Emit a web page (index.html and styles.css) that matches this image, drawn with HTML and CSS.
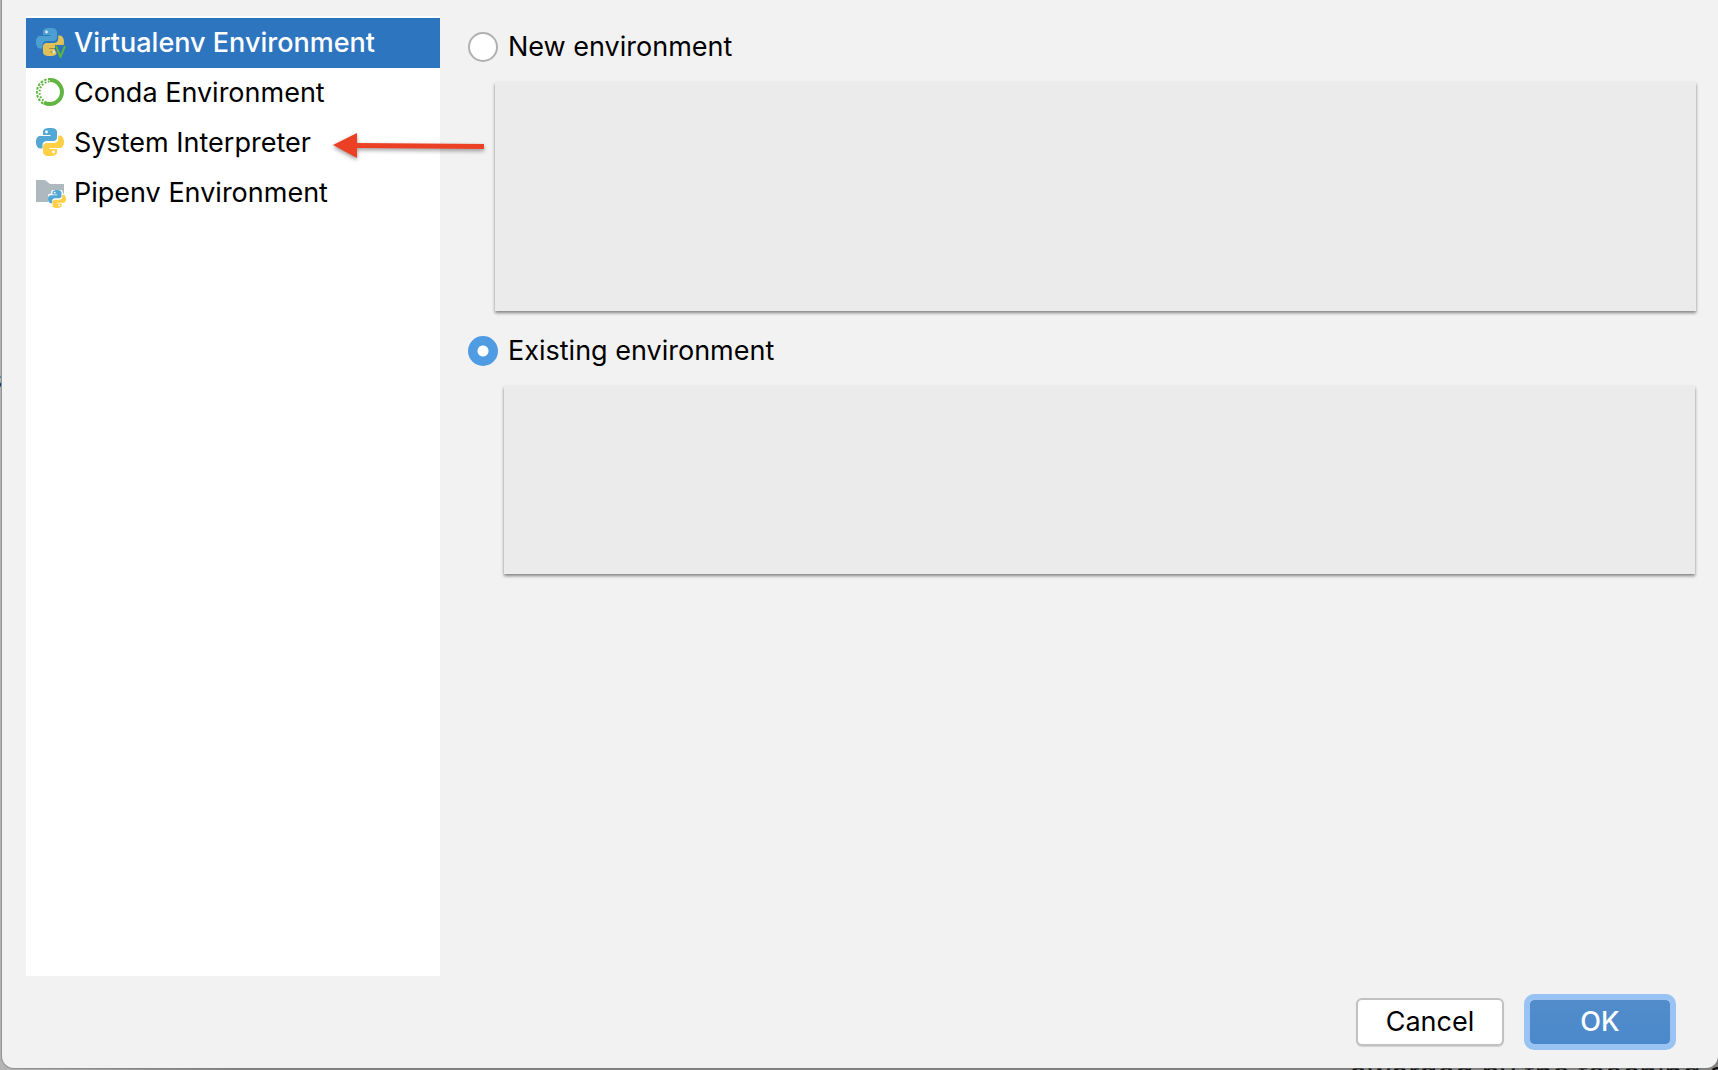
FILE: index.html
```html
<!DOCTYPE html>
<html lang="en">
<head>
<meta charset="utf-8">
<meta name="viewport" content="width=device-width, initial-scale=1">
<title>Add Python Interpreter</title>
<link rel="stylesheet" href="styles.css">
</head>
<body>
<svg class="defs" aria-hidden="true">
  <symbol id="python" viewBox="0 0 28 28">
    <path class="py-blue" d="M14 0C9 0 7 1.500 7 4v3h7.500v1H4C1.500 8 0 10.500 0 14s1.500 6.500 4 6.500h2.500V17c0-2.500 2-4 4.500-4h6.500c2 0 3.500-1.500 3.500-3.500V4c0-2.500-2-4-7-4Z"/>
    <path class="py-yellow" d="M14 28c5 0 7-1.500 7-4v-3h-7.500v-1H24c2.500 0 4-2.500 4-6s-1.500-6.500-4-6.500h-1.800V11c0 2.500-2 4-4.500 4h-7C8.500 15 7 16.500 7 18.500V24c0 2.500 2 4 7 4Z"/>
    <circle class="py-eye" cx="10.500" cy="4" r="1.400"/>
    <circle class="py-eye" cx="17.500" cy="24" r="1.400"/>
  </symbol>
</svg>
<p class="behind behind-bottom" aria-hidden="true">awarded by the teaching a</p>
<p class="behind behind-left" aria-hidden="true">s</p>
<main class="dialog">
  <div class="content">
    <nav class="sidebar">
      <a class="item selected" href="#virtualenv" aria-current="page">
        <svg class="icon" viewBox="0 0 30 30">
          <g class="dim"><use href="#python" width="28" height="28"/></g>
          <path d="M14 20.500h4M14 24h3" stroke="#a98b35" stroke-width="1"/>
          <path d="M19 17h11v5l-4 8h-3l-4-8Z" fill="#2d75bf"/>
          <path d="M20 18l4.500 11L29 18" fill="none" stroke="#5fb53c" stroke-width="2"/>
        </svg>
        Virtualenv Environment
      </a>
      <a class="item" href="#conda">
        <svg class="icon" viewBox="0 0 30 30">
          <path d="M14 2a12 12 0 1 1-6 22.400" fill="none" stroke="#62b543" stroke-width="4"/>
          <path d="M7.200 25.500A13.300 13.300 0 0 1 14 .9" fill="none" stroke="#62b543" stroke-width="2" stroke-dasharray="2.600 1.400"/>
          <path d="M8.500 23.500A11 11 0 0 1 14 3.300" fill="none" stroke="#62b543" stroke-width="2" stroke-dasharray="1.800 1.600" stroke-dashoffset="2"/>
        </svg>
        Conda Environment
      </a>
      <a class="item" href="#system">
        <svg class="icon" viewBox="0 0 30 30"><use href="#python" width="28" height="28"/></svg>
        System Interpreter
        <svg class="arrow" viewBox="0 0 156 32" aria-hidden="true">
          <path d="M1 13 25 1v10l127 1v5L25 16v10Z" fill="#ec4025"/>
        </svg>
      </a>
      <a class="item" href="#pipenv">
        <svg class="icon" viewBox="0 0 30 30">
          <path d="M0 2h9l5 4h14v18H0Z" fill="#adb8bf"/>
          <g transform="translate(12 12) scale(.643)">
            <g class="halo"><use href="#python" width="28" height="28"/></g>
            <use href="#python" width="28" height="28"/>
          </g>
        </svg>
        Pipenv Environment
      </a>
    </nav>
    <form class="options" id="environment">
      <label class="choice"><input type="radio" name="env">New environment</label>
      <section class="panel panel-new" aria-label="New environment settings"></section>
      <label class="choice"><input type="radio" name="env" checked>Existing environment</label>
      <section class="panel panel-existing" aria-label="Existing environment settings"></section>
    </form>
  </div>
  <footer class="actions">
    <button class="button" type="button">Cancel</button>
    <button class="button primary" type="submit" form="environment">OK</button>
  </footer>
</main>
</body>
</html>
```
FILE: styles.css
```css
* { box-sizing: border-box; }

body {
  position: relative;
  display: flex;
  min-height: 100vh;
  margin: 0;
  padding: 0 0 2px 2px;
  overflow: hidden;
  background: linear-gradient(90deg, #b4b4b4, #858585 240px);
  color: #000;
  font: 27px/30px Inter, "Liberation Sans", sans-serif;
}

.defs { position: absolute; width: 0; height: 0; }
.py-blue { fill: #52a7d5; }
.py-yellow { fill: #ffcf45; }
.py-eye { fill: #fff; stroke: none; }

.dialog {
  position: relative;
  display: flex;
  flex: 1;
  flex-direction: column;
  gap: 18px;
  padding: 16px 22px 18px 24px;
  border-radius: 0 0 12px 12px;
  background: #f2f2f2;
  box-shadow: 0 0 0 1px #7778;
}

.content { display: flex; flex: 1; gap: 28px; }

.sidebar {
  flex: 0 0 414px;
  padding-top: 2px;
  background: #fff;
}

.item {
  position: relative;
  display: flex;
  align-items: center;
  gap: 8px;
  height: 50px;
  padding-left: 10px;
  color: inherit;
  text-decoration: none;
}

.selected { background: #2d75bf; color: #fff; font-weight: 500; }
.icon { width: 30px; height: 30px; }
.dim { opacity: .85; }
.halo { stroke: #fff; stroke-width: 4px; }

.arrow {
  position: absolute;
  z-index: 1;
  top: 14px;
  left: 306px;
  width: 156px;
  height: 32px;
  filter: drop-shadow(0 2px 2px #0006);
}

.options { flex: 1; min-width: 0; padding-top: 16px; }

.choice { display: flex; align-items: center; gap: 10px; }

.choice input {
  width: 30px;
  height: 30px;
  margin: 0;
  appearance: none;
  border: 2px solid #b0b0b0;
  border-radius: 50%;
  background: #fff;
}

.choice input:checked {
  border: 0;
  background: radial-gradient(circle, #fff 5px, #4f9ce3 6px);
}

.panel {
  background: #ebebeb;
  box-shadow: 0 2px 3px #0007;
}

.panel-new { height: 229px; margin: 20px 0 25px 27px; }
.panel-existing { height: 188px; margin: 20px 1px 0 36px; }

.actions {
  display: flex;
  align-items: center;
  justify-content: flex-end;
  gap: 20px;
  padding-right: 20px;
}

.button {
  width: 148px;
  height: 48px;
  padding: 0;
  border: 2px solid #c1c1c1;
  border-radius: 6px;
  background: #fff;
  color: #000;
  font: inherit;
  box-shadow: 0 1px 1px #0002;
}

.primary {
  width: 152px;
  height: 56px;
  border: 6px solid #98c3f3;
  border-radius: 10px;
  background: linear-gradient(#528cca, #4a89cc) padding-box;
  color: #fff;
  font-weight: 500;
  box-shadow: none;
}

.behind { position: absolute; margin: 0; color: #111; white-space: nowrap; }
.behind-bottom { top: calc(100% - 12px); right: -8px; font-size: 30px; }
.behind-left { top: 365px; left: -12px; color: #123; }
```
